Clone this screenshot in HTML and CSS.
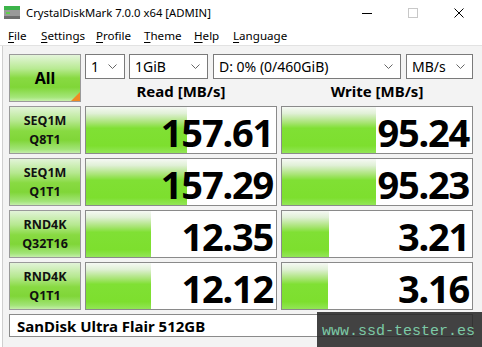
FILE: index.html
```html
<!DOCTYPE html>
<html>
<head>
<meta charset="utf-8">
<link rel="stylesheet" href="styles.css">
</head>
<body>
<div class="window">
  <div class="titlebar">
    <svg class="appicon" width="16" height="14" viewBox="0 0 16 14">
      <rect x="0" y="0" width="16" height="4" fill="#3cb44a"/>
      <rect x="0" y="4" width="16" height="9" fill="#9a9a9a"/>
      <rect x="0" y="10" width="16" height="3" fill="#6e6e6e"/>
      <rect x="2" y="6" width="4" height="2" fill="#5fd04a"/>
    </svg>
    <span class="title">CrystalDiskMark 7.0.0 x64 [ADMIN]</span>
    <div class="controls">
      <span class="ctl"><svg width="10" height="10" viewBox="0 0 10 10"><line x1="0" y1="5.5" x2="10" y2="5.5" stroke="#000" stroke-width="1"/></svg></span>
      <span class="ctl"><svg width="10" height="10" viewBox="0 0 10 10"><rect x="0.5" y="0.5" width="9" height="9" fill="none" stroke="#c8c8c8" stroke-width="1"/></svg></span>
      <span class="ctl"><svg width="10" height="10" viewBox="0 0 10 10"><path d="M0.5 0.5 L9.5 9.5 M9.5 0.5 L0.5 9.5" stroke="#000" stroke-width="1"/></svg></span>
    </div>
  </div>
  <div class="menubar">
    <span class="mi m1"><u>F</u>ile</span>
    <span class="mi m2"><u>S</u>ettings</span>
    <span class="mi m3"><u>P</u>rofile</span>
    <span class="mi m4"><u>T</u>heme</span>
    <span class="mi m5"><u>H</u>elp</span>
    <span class="mi"><u>L</u>anguage</span>
  </div>
  <div class="main">
    <div class="grid">
      <div class="all">All<span class="corner"></span></div>
      <div class="topright">
        <div class="selects">
          <div class="sel s1"><span>1</span><svg class="chev" width="9" height="5" viewBox="0 0 9 5"><path d="M0.5 0.5 L4.5 4.5 L8.5 0.5" fill="none" stroke="#666" stroke-width="1"/></svg></div>
          <div class="sel s2"><span>1GiB</span><svg class="chev" width="9" height="5" viewBox="0 0 9 5"><path d="M0.5 0.5 L4.5 4.5 L8.5 0.5" fill="none" stroke="#666" stroke-width="1"/></svg></div>
          <div class="sel s3"><span>D: 0% (0/460GiB)</span><svg class="chev" width="9" height="5" viewBox="0 0 9 5"><path d="M0.5 0.5 L4.5 4.5 L8.5 0.5" fill="none" stroke="#666" stroke-width="1"/></svg></div>
          <div class="sel s4"><span>MB/s</span><svg class="chev" width="9" height="5" viewBox="0 0 9 5"><path d="M0.5 0.5 L4.5 4.5 L8.5 0.5" fill="none" stroke="#666" stroke-width="1"/></svg></div>
        </div>
        <div class="heads">
          <div class="head">Read [MB/s]</div>
          <div class="head">Write [MB/s]</div>
        </div>
      </div>

      <div class="label"><span>SEQ1M</span><span>Q8T1</span></div>
      <div class="cell" style="--w:101px">157.61</div>
      <div class="cell" style="--w:94px">95.24</div>

      <div class="label"><span>SEQ1M</span><span>Q1T1</span></div>
      <div class="cell" style="--w:101px">157.29</div>
      <div class="cell" style="--w:94px">95.23</div>

      <div class="label"><span>RND4K</span><span>Q32T16</span></div>
      <div class="cell" style="--w:65px">12.35</div>
      <div class="cell" style="--w:47px">3.21</div>

      <div class="label"><span>RND4K</span><span>Q1T1</span></div>
      <div class="cell" style="--w:65px">12.12</div>
      <div class="cell" style="--w:46px">3.16</div>

      <div class="name">SanDisk Ultra Flair 512GB</div>
    </div>
  </div>
  <div class="watermark">www.ssd-tester.es</div>
</div>
</body>
</html>
```

FILE: styles.css
```css
html, body {
  margin: 0;
  padding: 0;
}
body {
  width: 482px;
  height: 347px;
  overflow: hidden;
  background: #ffffff;
  font-family: "Noto Sans", "Open Sans", sans-serif;
  color: #000;
}
.window {
  position: relative;
  width: 482px;
  height: 347px;
  display: flex;
  flex-direction: column;
}
.titlebar {
  height: 26px;
  display: flex;
  align-items: center;
  background: #fff;
  flex: none;
}
.appicon {
  margin-left: 4px;
  flex: none;
}
.title {
  margin-left: 6px;
  font-size: 11.3px;
  line-height: 26px;
}
.controls {
  margin-left: auto;
  display: flex;
  height: 26px;
}
.ctl {
  width: 46px;
  height: 26px;
  display: flex;
  align-items: center;
  justify-content: center;
}
.menubar {
  height: 19px;
  display: flex;
  align-items: center;
  padding-left: 8px;
  font-size: 11.6px;
  background: #fff;
  border-bottom: 1px solid #e2e2e2;
  flex: none;
}
.mi {
  white-space: nowrap;
}
.m1 { width: 33px; }
.m2 { width: 55px; }
.m3 { width: 48px; }
.m4 { width: 50px; }
.m5 { width: 39px; }
.mi u {
  text-decoration-thickness: 1px;
  text-underline-offset: 2px;
}
.main {
  flex: 1;
  margin-left: 2px;
  margin-bottom: 1px;
  border-left: 1px solid #cfcfcf;
  border-bottom: 1px solid #cfcfcf;
  background: #f3f3f3;
  padding: 8px 0 0 6px;
}
.grid {
  display: grid;
  grid-template-columns: 72px 192px 192px;
  grid-auto-rows: 48px;
  column-gap: 4px;
  row-gap: 4px;
}
.all {
  position: relative;
  box-sizing: border-box;
  border: 1px solid #9a9a9a;
  background: linear-gradient(to bottom, #e4f5da 0%, #b8ea92 30%, #88da42 50%, #80d638 70%, #a4e67a 92%, #c8f0ae 100%);
  display: flex;
  align-items: center;
  justify-content: center;
  font-weight: 700;
  font-size: 16px;
  overflow: hidden;
}
.corner {
  position: absolute;
  right: 0;
  bottom: 0;
  width: 0;
  height: 0;
  border-style: solid;
  border-width: 0 0 9px 9px;
  border-color: transparent transparent #f08a24 transparent;
}
.topright {
  grid-column: 2 / 4;
  display: flex;
  flex-direction: column;
}
.selects {
  display: flex;
  height: 25px;
  gap: 5px;
}
.sel {
  box-sizing: border-box;
  height: 25px;
  border: 1px solid #7a7a7a;
  background: #fff;
  display: flex;
  align-items: center;
  padding: 0 7px 0 5px;
  font-size: 14px;
}
.sel span {
  flex: 1;
  white-space: nowrap;
}
.chev {
  flex: none;
}
.s1 { width: 40px; margin-right: -1px; }
.s2 { width: 79px; }
.s3 { width: 188px; }
.s4 { width: 67px; }
.heads {
  flex: 1;
  display: grid;
  grid-template-columns: 192px 192px;
  column-gap: 4px;
  align-items: center;
}
.head {
  text-align: center;
  font-weight: 700;
  font-size: 15px;
  line-height: 23px;
  padding-top: 1px;
}
.label {
  box-sizing: border-box;
  border: 1px solid #9a9a9a;
  background: linear-gradient(to bottom, #e2f4d8 0%, #b6e890 30%, #88da42 52%, #80d638 72%, #a2e478 92%, #c4eeaa 100%);
  display: flex;
  flex-direction: column;
  align-items: center;
  justify-content: center;
  font-weight: 700;
  font-size: 12.5px;
  line-height: 19px;
  color: #111;
}
.cell {
  --w: 0px;
  box-sizing: border-box;
  border: 1px solid #8a8a8a;
  background:
    linear-gradient(to bottom, #f6f9f4 0%, #e0f0d6 14%, #a8e474 34%, #80e034 46%, #7ddf2e 84%, #92e656 100%) no-repeat 0 0 / var(--w) 100%,
    #fff;
  display: flex;
  align-items: center;
  justify-content: flex-end;
  padding: 3px 3px 0 0;
  font-weight: 700;
  font-size: 38px;
  letter-spacing: -1.2px;
  line-height: 1;
}
.name {
  grid-column: 1 / 4;
  height: 23px;
  box-sizing: border-box;
  border: 1px solid #8a8a8a;
  background: #fff;
  display: flex;
  align-items: center;
  padding-left: 7px;
  font-weight: 700;
  font-size: 15px;
}
.watermark {
  position: absolute;
  left: 317px;
  top: 312px;
  right: 0;
  bottom: 0;
  background: rgba(40, 40, 40, 0.88);
  color: #7ccaa6;
  font-family: "Liberation Mono", "DejaVu Sans Mono", monospace;
  font-size: 15px;
  display: flex;
  align-items: center;
  padding-left: 5px;
  padding-top: 3px;
  box-sizing: border-box;
}
```
